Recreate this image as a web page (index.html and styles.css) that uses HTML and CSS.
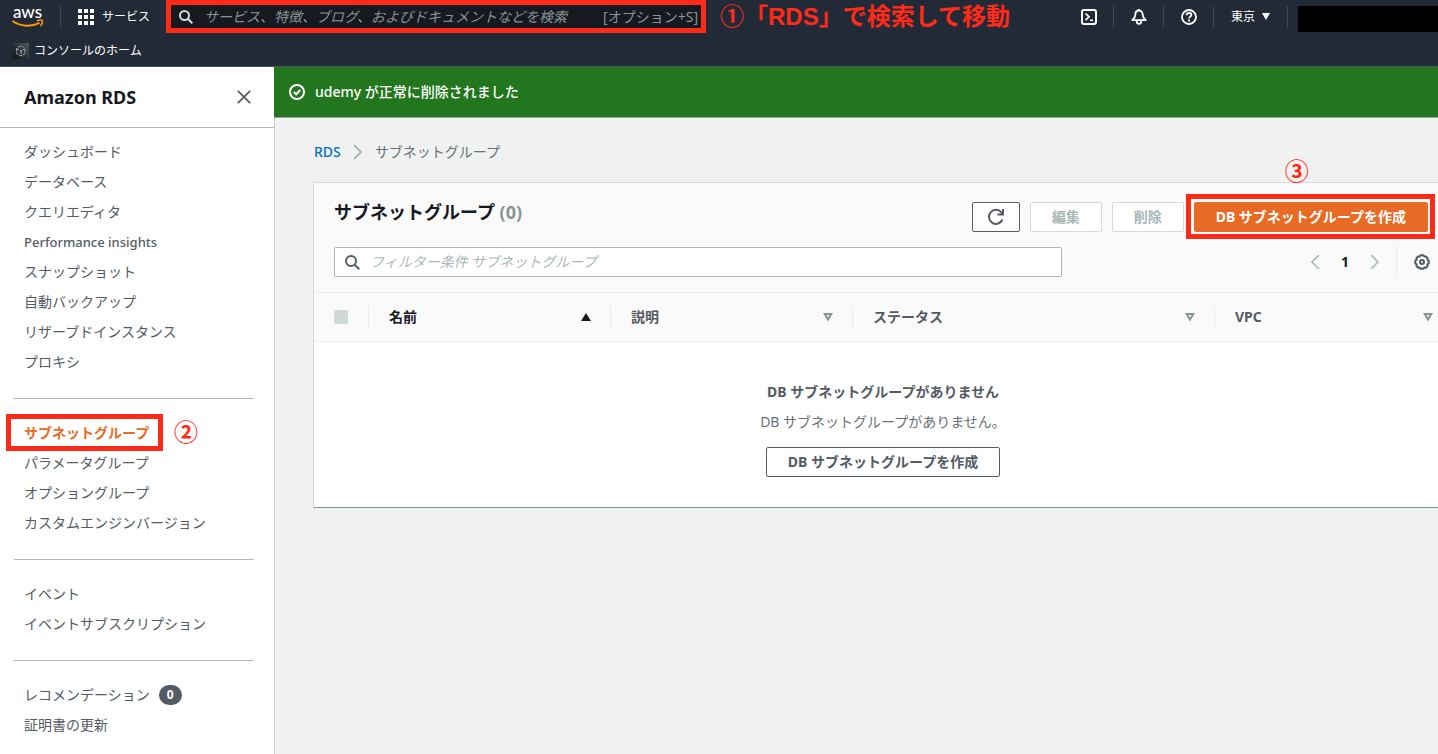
FILE: index.html
```html
<!DOCTYPE html>
<html lang="ja">
<head>
<meta charset="utf-8">
<title>サブネットグループ - Amazon RDS</title>
<link rel="stylesheet" href="styles.css">
</head>
<body>
<header class="topnav">
  <div class="topnav-bar">
    <a class="logo" href="#" aria-label="aws">
      <svg width="32" height="31" viewBox="0 -4 32 31">
        <text class="logo-text" x="15.500" y="13" text-anchor="middle">aws</text>
        <path d="M0.500 16C9 21.800 19.500 22 27.500 17.800" fill="none" stroke="#f90" stroke-width="2"/>
        <path d="M25 15.700c2-.7 4.600-.8 5.300-.2.600.8-.4 3.800-1.800 5.500" fill="none" stroke="#f90" stroke-width="1.500"/>
      </svg>
    </a>
    <button class="services">
      <svg width="16" height="16" viewBox="0 0 16 16" fill="currentColor"><rect width="4" height="4"/><rect x="6" width="4" height="4"/><rect x="12" width="4" height="4"/><rect y="6" width="4" height="4"/><rect x="6" y="6" width="4" height="4"/><rect x="12" y="6" width="4" height="4"/><rect y="12" width="4" height="4"/><rect x="6" y="12" width="4" height="4"/><rect x="12" y="12" width="4" height="4"/></svg>
      サービス
    </button>
    <div class="global-search">
      <svg width="14" height="14" viewBox="0 0 14 14" fill="none" stroke="#d5dbdb" stroke-width="2"><circle cx="5.500" cy="5.500" r="4.500"/><path d="M8.800 8.800l4.500 4.500"/></svg>
      <input type="search" aria-label="検索" placeholder="サービス、特徴、ブログ、およびドキュメントなどを検索">
      <span class="shortcut">[オプション+S]</span>
    </div>
    <p class="note">①「RDS」で検索して移動</p>
    <div class="utilities">
      <button class="utility" aria-label="CloudShell">
        <svg width="16" height="16" viewBox="0 0 16 16" fill="none" stroke="currentColor" stroke-width="2"><rect x="1" y="1" width="14" height="14" rx="2"/><path d="M4.500 4.500L8 7.800l-3.500 3.300" stroke-width="1.700"/><path d="M9 11.300h3" stroke-width="1.700"/></svg>
      </button>
      <button class="utility" aria-label="通知">
        <svg width="16" height="16" viewBox="0 0 16 16" fill="none" stroke="currentColor" stroke-width="1.800" stroke-linejoin="round"><path d="M8 1.500C5.500 1.500 4.300 3.500 4.300 6c0 2.200-1 3.300-3 5.200h13.400c-2-1.900-3-3-3-5.200 0-2.500-1.200-4.500-3.700-4.500z"/><path d="M5.800 11.500v1.300c0 1.200.9 2 2.200 2s2.200-.8 2.200-2v-1.300M8 0v2"/></svg>
      </button>
      <button class="utility" aria-label="ヘルプ">
        <svg width="16" height="16" viewBox="0 0 16 16" fill="none" stroke="currentColor" stroke-width="1.800"><circle cx="8" cy="8" r="7"/><path d="M5.600 6.300C5.600 4.900 6.600 4 8 4s2.400.9 2.400 2.100C10.400 7.600 8 7.700 8 9.500"/><path d="M8 10.600v1.900"/></svg>
      </button>
      <button class="utility region">東京
        <svg width="8" height="7" viewBox="0 0 8 7" fill="currentColor"><path d="M0 0h8L4 7z"/></svg>
      </button>
      <div class="account"></div>
    </div>
  </div>
  <nav class="favorites">
    <a href="#">
      <svg width="16" height="16" viewBox="0 0 16 16"><defs><linearGradient id="tile" x1="0" y1="1" x2="1" y2="0"><stop stop-color="#0f1115"/><stop offset="1" stop-color="#505762"/></linearGradient></defs><rect width="16" height="16" fill="url(#tile)"/><path d="M3.500 5.500L8 8l4-2.500M8 8v5M3.500 5.500v5L8 13l4-2.500v-5M5.500 4.200L8 3l2.500 1.200" fill="none" stroke="#c8cdd2" stroke-width=".8" stroke-dasharray="3 1"/></svg>
      コンソールのホーム
    </a>
  </nav>
</header>

<div class="layout">
  <aside class="sidebar">
    <div class="sidebar-head">
      <h2>Amazon RDS</h2>
      <button class="close" aria-label="閉じる"><svg width="14" height="14" viewBox="0 0 14 14" stroke="currentColor" stroke-width="1.700"><path d="M.8.800l12.400 12.400M13.200.800L.8 13.200"/></svg></button>
    </div>
    <nav class="sidebar-nav">
      <ul>
        <li><a href="#">ダッシュボード</a></li>
        <li><a href="#">データベース</a></li>
        <li><a href="#">クエリエディタ</a></li>
        <li><a class="latin" href="#">Performance insights</a></li>
        <li><a href="#">スナップショット</a></li>
        <li><a href="#">自動バックアップ</a></li>
        <li><a href="#">リザーブドインスタンス</a></li>
        <li><a href="#">プロキシ</a></li>
      </ul>
      <ul>
        <li><a class="current framed" href="#" aria-current="page">サブネットグループ</a><span class="mark mark-side">②</span></li>
        <li><a href="#">パラメータグループ</a></li>
        <li><a href="#">オプショングループ</a></li>
        <li><a href="#">カスタムエンジンバージョン</a></li>
      </ul>
      <ul>
        <li><a href="#">イベント</a></li>
        <li><a href="#">イベントサブスクリプション</a></li>
      </ul>
      <ul>
        <li><a href="#">レコメンデーション</a><span class="badge">0</span></li>
        <li><a href="#">証明書の更新</a></li>
      </ul>
    </nav>
  </aside>

  <main class="main">
    <div class="flash" role="status">
      <svg width="16" height="16" viewBox="0 0 16 16" fill="none" stroke="currentColor" stroke-width="2"><circle cx="8" cy="8" r="7"/><path d="M4.800 8l2.400 2.300 4-4.300"/></svg>
      udemy が正常に削除されました
    </div>
    <div class="content">
      <nav class="breadcrumb">
        <a href="#">RDS</a>
        <svg width="10" height="16" viewBox="0 0 10 16" fill="none" stroke="#aab7b8" stroke-width="2"><path d="M1 1l7 7-7 7"/></svg>
        <span>サブネットグループ</span>
      </nav>
      <section class="panel">
        <div class="panel-head">
          <div class="title-row">
            <h1>サブネットグループ <span>(0)</span></h1>
            <div class="actions">
              <button class="btn btn-icon" aria-label="更新"><svg width="18" height="18" viewBox="0 0 18 18" fill="none" stroke="currentColor" stroke-width="2"><path d="M15.500 11.500A7 7 0 1 1 14.500 4.500L16 6.200"/><path d="M16 1v5.500h-5.500"/></svg></button>
              <button class="btn" disabled>編集</button>
              <button class="btn" disabled>削除</button>
              <span class="create"><button class="btn btn-primary">DB サブネットグループを作成</button><span class="mark mark-top">③</span></span>
            </div>
          </div>
          <div class="filter-row">
            <div class="filter">
              <svg width="15" height="15" viewBox="0 0 15 15" fill="none" stroke="currentColor" stroke-width="2"><circle cx="6" cy="6" r="5"/><path d="M9.700 9.700l4.600 4.600"/></svg>
              <input type="search" aria-label="フィルター" placeholder="フィルター条件 サブネットグループ">
            </div>
            <div class="pager">
              <button aria-label="前へ"><svg width="10" height="16" viewBox="0 0 10 16" fill="none" stroke="currentColor" stroke-width="1.700"><path d="M9 1L2 8l7 7"/></svg></button>
              <span>1</span>
              <button aria-label="次へ"><svg width="10" height="16" viewBox="0 0 10 16" fill="none" stroke="currentColor" stroke-width="1.700"><path d="M1 1l7 7-7 7"/></svg></button>
            </div>
            <button class="settings" aria-label="設定"><svg width="16" height="16" viewBox="0 0 16 16" fill="none" stroke="currentColor" stroke-width="2"><path d="M6.500 1.300h3l.8 1.300 1.600-.2 1.700 1.800-.3 1.500 1.400.9v2.900l-1.400.9.3 1.500-1.700 1.800-1.600-.3-.8 1.300h-3l-.8-1.300-1.600.3-1.700-1.800.3-1.500-1.400-.9V6.600l1.400-.9-.3-1.500 1.700-1.800 1.600.2z" stroke-linejoin="round"/><circle cx="8" cy="8" r="2"/></svg></button>
          </div>
        </div>
        <table>
          <colgroup><col class="c-check"><col class="c-name"><col class="c-name"><col class="c-status"><col></colgroup>
          <thead>
            <tr>
              <th><div class="cell"><input type="checkbox" aria-label="すべて選択" disabled></div></th>
              <th class="sorted"><div class="cell">名前<svg width="10" height="8" viewBox="0 0 10 8"><path d="M5 0l5 8H0z" fill="currentColor"/></svg></div></th>
              <th><div class="cell">説明<svg width="10" height="8" viewBox="0 0 10 8"><path d="M1.700 1h6.600L5 6.600z" fill="none" stroke="#879596" stroke-width="2"/></svg></div></th>
              <th><div class="cell">ステータス<svg width="10" height="8" viewBox="0 0 10 8"><path d="M1.700 1h6.600L5 6.600z" fill="none" stroke="#879596" stroke-width="2"/></svg></div></th>
              <th class="last"><div class="cell">VPC<svg width="10" height="8" viewBox="0 0 10 8"><path d="M1.700 1h6.600L5 6.600z" fill="none" stroke="#879596" stroke-width="2"/></svg></div></th>
            </tr>
          </thead>
          <tbody>
            <tr>
              <td colspan="5">
                <div class="empty">
                  <strong>DB サブネットグループがありません</strong>
                  <p>DB サブネットグループがありません。</p>
                  <button class="btn">DB サブネットグループを作成</button>
                </div>
              </td>
            </tr>
          </tbody>
        </table>
      </section>
    </div>
  </main>
</div>
</body>
</html>
```

FILE: styles.css
```css
* { box-sizing: border-box; }

body {
  margin: 0;
  min-height: 100vh;
  display: flex;
  flex-direction: column;
  overflow: hidden;
  background: #f0f2f2;
  color: #545b64;
  font: 14px/22px "Noto Sans", "Noto Sans CJK JP", sans-serif;
}

h1, h2, p, ul { margin: 0; padding: 0; }
ul { list-style: none; }
svg { display: block; flex: none; }
a { color: inherit; text-decoration: none; }
button, input { font: inherit; color: inherit; }
button { padding: 0; border: 0; background: none; cursor: pointer; }

/* Global navigation */
.topnav {
  height: 67px;
  background: #232a37;
  border-bottom: 1px solid #4b5260;
  color: #fff;
}

.topnav-bar {
  height: 33px;
  display: flex;
  align-items: center;
}

.logo {
  display: flex;
  align-items: center;
  height: 22px;
  padding: 0 16px 0 12px;
  border-right: 1px solid #414750;
}
.logo-text {
  font: 500 17px Lato, sans-serif;
  fill: #fff;
}

.services {
  display: flex;
  align-items: center;
  gap: 8px;
  padding: 0 16px 0 17px;
  font-size: 12px;
}

.global-search {
  width: 540px;
  height: 33px;
  display: flex;
  align-items: center;
  padding: 0 3px 0 8px;
  border: 5px solid #ff2a17;
  background: #16191f;
  color: #879596;
}
.global-search input {
  flex: 1;
  min-width: 0;
  padding: 0 0 0 11px;
  border: 0;
  background: none;
}
.global-search input::placeholder {
  color: #879596;
  font-style: italic;
}

.note, .mark {
  color: #ff2a17;
  font: 600 24px/32px "Liberation Sans", "Noto Sans CJK JP", sans-serif;
  white-space: nowrap;
}
.note { padding-left: 14px; }

.utilities {
  display: flex;
  align-items: center;
  margin-left: auto;
}
.utility {
  height: 22px;
  display: flex;
  align-items: center;
  justify-content: center;
  width: 50px;
  border-right: 1px solid #414750;
}
.region {
  width: 74px;
  gap: 7px;
  font-size: 12px;
}
.account {
  width: 140px;
  height: 26px;
  margin: 4px 0 0 10px;
  background: #000;
}

.favorites { padding: 7px 13px; }
.favorites a {
  display: inline-flex;
  align-items: center;
  gap: 5px;
  font-size: 12px;
}

/* Page layout */
.layout {
  flex: 1;
  display: flex;
}

.sidebar {
  width: 275px;
  flex: none;
  background: #fff;
  border-right: 1px solid #c5cccc;
}
.sidebar-head {
  height: 61px;
  display: flex;
  align-items: center;
  justify-content: space-between;
  padding: 0 23px 0 24px;
  border-bottom: 1px solid #b6baba;
  color: #16191f;
}
.sidebar-head h2 { font-size: 18px; font-weight: 700; }
.close { color: #545b64; }

.sidebar-nav { padding: 13px 20px 0 14px; }
.sidebar-nav ul { padding: 0 10px; }
.sidebar-nav ul + ul {
  margin-top: 25px;
  padding-top: 23px;
  border-top: 1px solid #b5b5b5;
}
.sidebar-nav li {
  display: flex;
  align-items: center;
  position: relative;
}
.sidebar-nav li + li { margin-top: 8px; }
.latin { font-size: 13px; font-weight: 500; }
.current { color: #e76b24; font-weight: 700; }

.framed { position: relative; }
.framed::after {
  content: "";
  position: absolute;
  inset: -8px -14px -7px -18px;
  border: 5px solid #ff2a17;
}
.mark { position: absolute; }
.mark-side { left: 150px; top: -5px; }

.badge {
  margin-left: 9px;
  padding: 0 8px;
  border-radius: 10px;
  background: #545b64;
  color: #fff;
  font-size: 12px;
  font-weight: 700;
  line-height: 20px;
}

.main { flex: 1; min-width: 0; }

/* The notification covers the sidebar's edge line */
.flash {
  position: relative;
  display: flex;
  align-items: center;
  gap: 10px;
  margin-left: -1px;
  padding: 14px 15px;
  border-bottom: 1px solid #9aa39a;
  background: #22761d;
  color: #fff;
  font-weight: 500;
}

.content { padding: 23px 0 0 38px; }

.breadcrumb {
  display: flex;
  align-items: center;
  gap: 12px;
  padding-left: 1px;
}
.breadcrumb a { color: #0073bb; font-weight: 500; }

/* Table container */
.panel {
  margin-top: 19px;
  border: 1px solid #d5dbdb;
  border-right: 0;
  border-bottom-color: #879596;
  background: #fff;
}
.panel-head {
  padding: 14px 10px 15px 20px;
  background: #fafafa;
}
.title-row {
  display: flex;
  align-items: flex-start;
  justify-content: space-between;
}
h1 {
  color: #16191f;
  font-size: 18px;
  font-weight: 700;
  line-height: 30px;
}
h1 span { color: #879596; }

.actions {
  display: flex;
  gap: 10px;
  padding-top: 5px;
}
.btn {
  height: 30px;
  padding: 0 21px;
  border: 1px solid #545b64;
  border-radius: 2px;
  background: #fff;
  font-weight: 700;
  line-height: 22px;
  white-space: nowrap;
}
.btn:disabled { color: #aab7b8; border-color: #d5dbdb; }
.btn-icon { padding: 0 14px; }
.btn-primary {
  border-color: #e76b24;
  background: #e76b24;
  color: #fff;
}
.create { position: relative; }
.create::after {
  content: "";
  position: absolute;
  inset: -8px -7px -7px -8px;
  border: 5px solid #ff2a17;
  pointer-events: none;
}
.mark-top { left: 50%; top: -46px; margin-left: -26px; }

.filter-row {
  display: flex;
  align-items: center;
  margin-top: 15px;
}
.filter {
  flex: 1;
  max-width: 728px;
  height: 30px;
  display: flex;
  align-items: center;
  gap: 10px;
  padding: 0 10px;
  border: 1px solid #aab7b8;
  border-radius: 2px;
  background: #fff;
}
.filter input {
  flex: 1;
  min-width: 0;
  padding: 0;
  border: 0;
  background: none;
}
.filter input::placeholder { color: #aab7b8; font-style: italic; }

.pager {
  display: flex;
  align-items: center;
  gap: 21px;
  margin-left: auto;
  padding-right: 16px;
  color: #aab7b8;
}
.pager span { color: #16191f; font-weight: 700; }
.settings {
  height: 30px;
  padding-left: 17px;
  border-left: 1px solid #eaeded;
}
.settings svg { margin-right: -2px; }

table {
  width: 100%;
  table-layout: fixed;
  border-collapse: collapse;
}
.c-check { width: 55px; }
.c-name { width: 242px; }
.c-status { width: 362px; }
th {
  padding: 12px 0;
  border: solid #eaeded;
  border-width: 1px 0;
  background: #fafafa;
  font-weight: 700;
  text-align: left;
}
.cell {
  height: 24px;
  display: flex;
  align-items: center;
  justify-content: space-between;
  padding: 0 19px 0 20px;
  border-right: 1px solid #eaeded;
}
.last .cell { padding-right: 5px; border-right: 0; }
.sorted { color: #16191f; }
th input {
  appearance: none;
  width: 14px;
  height: 14px;
  flex: none;
  margin: 0;
  border-radius: 2px;
  background: #d1d9d8;
}

td { padding: 0; }
.empty {
  display: flex;
  flex-direction: column;
  align-items: center;
  gap: 8px;
  padding: 39px 0 30px 14px;
}
.empty .btn { margin-top: 6px; }
.empty p, .breadcrumb span { color: #687078; }
```
